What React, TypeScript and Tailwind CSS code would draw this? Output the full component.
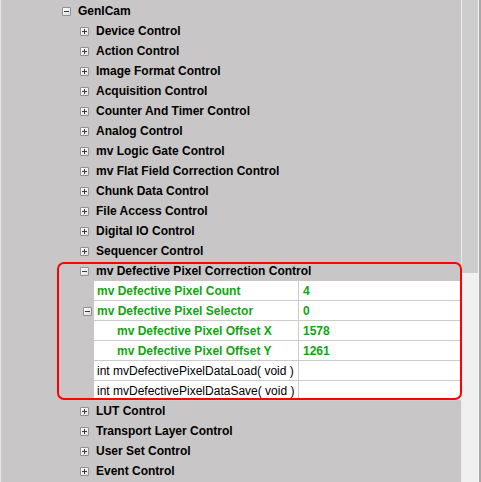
import React from "react";

const font = { fontFamily: '"Liberation Sans", Arial, sans-serif' };

function Box({ minus }: { minus?: boolean }) {
  return (
    <span className="relative inline-block w-[9px] h-[9px] border border-[#919191] rounded-[1px] bg-gradient-to-br from-white to-[#dcdcdc] shrink-0">
      <span className="absolute left-[1px] top-[3px] w-[5px] h-[1px] bg-[#3a3a3a]" />
      {!minus && <span className="absolute left-[3px] top-[1px] w-[1px] h-[5px] bg-[#3a3a3a]" />}
    </span>
  );
}

function TreeRow({ label, indent, minus }: { label: string; indent: number; minus?: boolean }) {
  return (
    <div className="h-[20px] flex items-center" style={{ paddingLeft: indent }}>
      <Box minus={minus} />
      <span className="ml-[7px] text-[12px] font-bold text-black whitespace-nowrap leading-none">{label}</span>
    </div>
  );
}

function TableRow({
  label,
  value,
  green,
  indentText,
  minus,
}: {
  label: string;
  value?: string;
  green?: boolean;
  indentText?: boolean;
  minus?: boolean;
}) {
  const color = green ? "text-[#10a510] font-bold" : "text-black";
  return (
    <div className="h-[20px] flex">
      <div className="w-[93px] shrink-0 flex items-center pl-[82px]">{minus && <Box minus />}</div>
      <div className="flex-1 flex bg-white border-b border-[#cbcbcb]">
        <div
          className={`w-[205px] shrink-0 flex items-center border-r border-[#cbcbcb] text-[12px] leading-none whitespace-nowrap ${color} ${
            indentText ? "pl-[23px]" : "pl-[3px]"
          }`}
        >
          {label}
        </div>
        <div className={`flex-1 flex items-center pl-[4px] text-[12px] leading-none ${color}`}>{value}</div>
      </div>
    </div>
  );
}

export default function App() {
  const top = [
    "Device Control",
    "Action Control",
    "Image Format Control",
    "Acquisition Control",
    "Counter And Timer Control",
    "Analog Control",
    "mv Logic Gate Control",
    "mv Flat Field Correction Control",
    "Chunk Data Control",
    "File Access Control",
    "Digital IO Control",
    "Sequencer Control",
  ];
  const bottom = ["LUT Control", "Transport Layer Control", "User Set Control", "Event Control"];
  return (
    <div className="w-[481px] h-[482px] flex bg-[#c8c6c6] overflow-hidden" style={font}>
      <div className="w-[1px] bg-[#e6e6e6]" />
      <div className="w-[460px] pt-[1px] flex flex-col">
        <TreeRow label="GenICam" indent={61} minus />
        {top.map((t) => (
          <TreeRow key={t} label={t} indent={79} />
        ))}
        <div className="relative">
          <TreeRow label="mv Defective Pixel Correction Control" indent={79} minus />
          <TableRow label="mv Defective Pixel Count" value="4" green />
          <TableRow label="mv Defective Pixel Selector" value="0" green minus />
          <TableRow label="mv Defective Pixel Offset X" value="1578" green indentText />
          <TableRow label="mv Defective Pixel Offset Y" value="1261" green indentText />
          <TableRow label="int mvDefectivePixelDataLoad( void )" />
          <TableRow label="int mvDefectivePixelDataSave( void )" />
          <div className="absolute left-[56px] top-[1px] w-[405px] h-[138px] border-2 border-[#ff0000] rounded-[7px] pointer-events-none" />
        </div>
        {bottom.map((t) => (
          <TreeRow key={t} label={t} indent={79} />
        ))}
      </div>
      <div className="w-[1px] bg-[#ececec]" />
      <div className="w-[16px] flex flex-col bg-[#f0f0f0]">
        <div className="h-[273px] bg-[#cdcdcd]" />
      </div>
      <div className="w-[1px] bg-[#f4f4f4]" />
      <div className="w-[2px] bg-[#a8a8a8]" />
    </div>
  );
}
